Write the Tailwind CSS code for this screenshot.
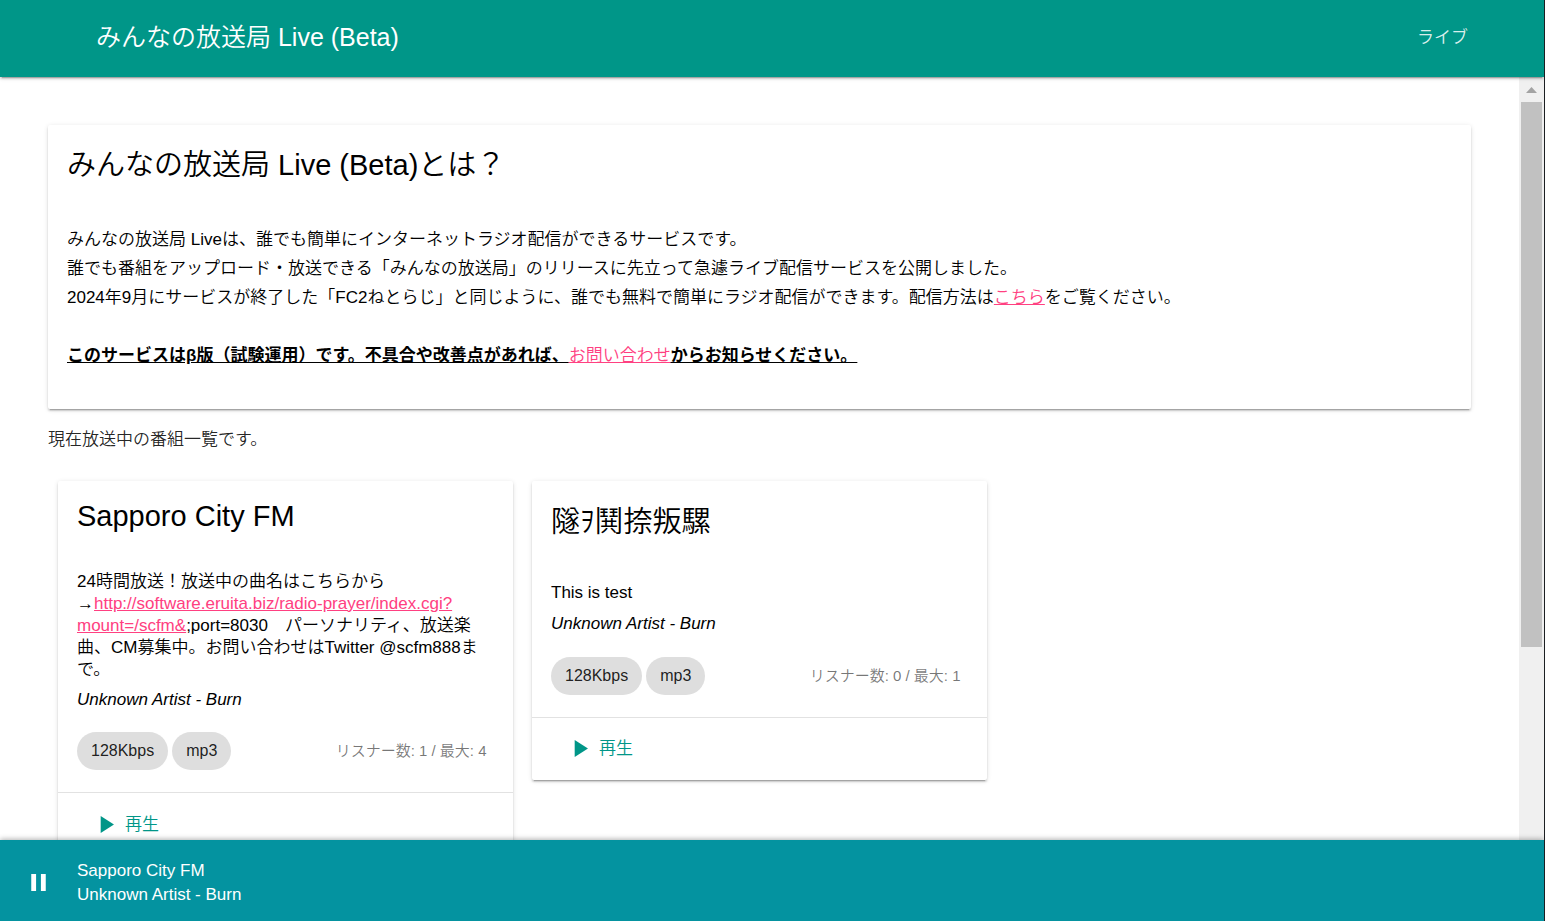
<!DOCTYPE html>
<html lang="ja">
<head>
<meta charset="utf-8">
<meta name="viewport" content="width=device-width, initial-scale=1">
<title>みんなの放送局 Live (Beta)</title>
<script src="https://cdn.jsdelivr.net/npm/@tailwindcss/browser@4"></script>
</head>
<body class="flex h-screen flex-col overflow-hidden border-r border-[#1c1f22] bg-white font-['Liberation_Sans','Noto_Sans_CJK_JP',sans-serif] text-[17px] font-[350] text-black">

<header class="relative z-10 flex h-[77px] shrink-0 items-center justify-between bg-[#009688] pr-[76px] pb-[2px] pl-24 text-white shadow-[0_2px_2px_0_rgba(0,0,0,0.14),0_3px_1px_-2px_rgba(0,0,0,0.2),0_1px_5px_0_rgba(0,0,0,0.12)]">
  <h1 class="text-[25px]">みんなの放送局 Live (Beta)</h1>
  <nav><a href="#live" class="text-white/87">ライブ</a></nav>
</header>

<div class="flex min-h-0 flex-1">
  <main class="min-w-0 flex-1 overflow-hidden p-12">
    <section class="rounded-[2px] bg-white px-[19px] pt-[19px] pb-[39px] shadow-[0_2px_2px_0_rgba(0,0,0,0.14),0_3px_1px_-2px_rgba(0,0,0,0.2),0_1px_5px_0_rgba(0,0,0,0.12)]">
      <h2 class="text-[29px] leading-[43px]">みんなの放送局 Live (Beta)とは？</h2>
      <div class="mt-[38px] leading-[29px]">
        <p>みんなの放送局 Liveは、誰でも簡単にインターネットラジオ配信ができるサービスです。</p>
        <p>誰でも番組をアップロード・放送できる「みんなの放送局」のリリースに先立って急遽ライブ配信サービスを公開しました。</p>
        <p>2024年9月にサービスが終了した「FC2ねとらじ」と同じように、誰でも無料で簡単にラジオ配信ができます。配信方法は<a href="#howto" class="text-[#ff4081] underline">こちら</a>をご覧ください。</p>
        <p class="mt-[29px] font-bold underline">このサービスはβ版（試験運用）です。不具合や改善点があれば、<a href="#contact" class="font-[350] text-[#ff4081] underline">お問い合わせ</a>からお知らせください。</p>
      </div>
    </section>

    <p class="mt-[16px] leading-[29px] text-black/87">現在放送中の番組一覧です。</p>

    <div class="mt-[27px] grid grid-cols-3 items-start gap-[19px] px-[10px]" id="live">
      <article class="rounded-[2px] bg-white shadow-[0_2px_2px_0_rgba(0,0,0,0.14),0_3px_1px_-2px_rgba(0,0,0,0.2),0_1px_5px_0_rgba(0,0,0,0.12)]">
        <div class="w-9/10 box-content pt-[19px] pb-[22px] pl-[19px]">
          <h2 class="text-[29px] leading-[33px]">Sapporo City FM</h2>
          <p class="mt-[38px] leading-[22px]">24時間放送！放送中の曲名はこちらから<br>→<a href="#scfm" class="text-[#ff4081] underline">http://software.eruita.biz/radio-prayer/index.cgi?<wbr>mount=/scfm&amp;</a>;port=8030　パーソナリティ、放送楽曲、CM募集中。お問い合わせはTwitter @scfm888まで。</p>
          <p class="mt-[8px] leading-[22px] italic">Unknown Artist - Burn</p>
          <div class="mt-[21px] flex items-center gap-1">
            <span class="flex h-[38px] items-center rounded-full bg-[#dedede] px-[14px] text-base text-black/87">128Kbps</span>
            <span class="flex h-[38px] items-center rounded-full bg-[#dedede] px-[14px] text-base text-black/87">mp3</span>
            <span class="ml-auto text-[15px] text-black/54">リスナー数: 1 / 最大: 4</span>
          </div>
        </div>
        <div class="h-[63px] border-t border-[#e2e2e2] pt-[17px] pl-[33px]">
          <button type="button" class="flex h-[29px] items-center gap-[5px] text-[#009688]">
            <svg class="size-[29px]" viewBox="0 0 24 24" fill="currentColor" aria-hidden="true"><path d="M8 5v14l11-7z"/></svg>
            <span>再生</span>
          </button>
        </div>
      </article>

      <article class="rounded-[2px] bg-white shadow-[0_2px_2px_0_rgba(0,0,0,0.14),0_3px_1px_-2px_rgba(0,0,0,0.2),0_1px_5px_0_rgba(0,0,0,0.12)]">
        <div class="w-9/10 box-content pt-[19px] pb-[22px] pl-[19px]">
          <h2 class="text-[29px] leading-[44px]">隧ｦ鬨捺叛騾</h2>
          <p class="mt-[38px] leading-[22px]">This is test</p>
          <p class="mt-[9px] leading-[22px] italic">Unknown Artist - Burn</p>
          <div class="mt-[22px] flex items-center gap-1">
            <span class="flex h-[38px] items-center rounded-full bg-[#dedede] px-[14px] text-base text-black/87">128Kbps</span>
            <span class="flex h-[38px] items-center rounded-full bg-[#dedede] px-[14px] text-base text-black/87">mp3</span>
            <span class="ml-auto text-[15px] text-black/54">リスナー数: 0 / 最大: 1</span>
          </div>
        </div>
        <div class="h-[63px] border-t border-[#e2e2e2] pt-[16px] pl-[33px]">
          <button type="button" class="flex h-[29px] items-center gap-[5px] text-[#009688]">
            <svg class="size-[29px]" viewBox="0 0 24 24" fill="currentColor" aria-hidden="true"><path d="M8 5v14l11-7z"/></svg>
            <span>再生</span>
          </button>
        </div>
      </article>
    </div>
  </main>

  <!-- Scrollbar -->
  <div class="flex w-[25px] shrink-0 flex-col items-center bg-[#f0f0f0]" aria-hidden="true">
    <svg class="h-[25px] w-[25px] shrink-0" viewBox="0 0 25 25"><path d="M7 16h11l-5.500-6z" fill="#a3a3a3"/></svg>
    <div class="h-[545px] w-[21px] bg-[#c1c1c1]"></div>
  </div>
</div>

<footer class="relative z-10 flex h-[81px] shrink-0 items-center gap-6 bg-[#0493a0] pl-6 text-white shadow-[0_-1px_5px_0_rgba(0,0,0,0.3)]">
  <button type="button" aria-label="一時停止" class="mt-1">
    <svg class="size-[29px]" viewBox="0 0 24 24" fill="currentColor" aria-hidden="true"><path d="M6 19h4V5H6v14zm8-14v14h4V5h-4z"/></svg>
  </button>
  <div class="pt-1 leading-6">
    <p>Sapporo City FM</p>
    <p>Unknown Artist - Burn</p>
  </div>
</footer>

</body>
</html>
